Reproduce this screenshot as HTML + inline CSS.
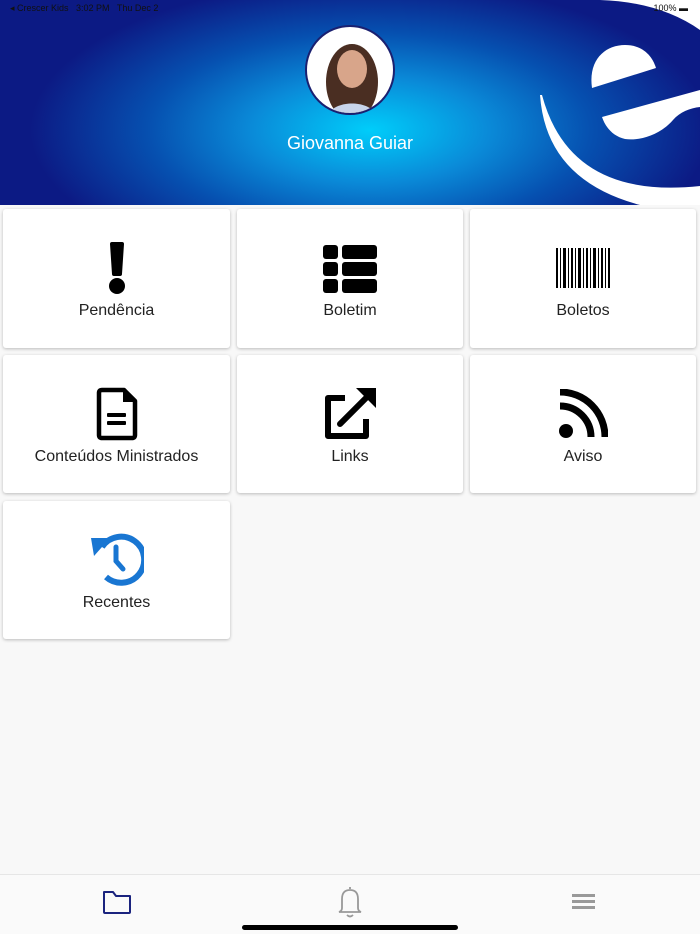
<!DOCTYPE html>
<html><head><meta charset="utf-8"><style>
*{margin:0;padding:0;box-sizing:border-box}
body{width:700px;height:934px;background:#f8f8f8;font-family:"Liberation Sans",sans-serif;position:relative;overflow:hidden}
.hdr{position:absolute;left:0;top:0;width:700px;height:205px;background:radial-gradient(ellipse 340px 150px at 370px 130px,#00cdfa 0%,#0a8ad8 35%,#0650b0 65%,#0c1a84 100%);overflow:hidden}
.sb{position:absolute;top:3px;font-size:9px;color:#111}
.av{position:absolute;left:305px;top:25px;width:90px;height:90px;border-radius:50%;background:#fff;border:2px solid #1a2070;overflow:hidden}
.name{position:absolute;top:133px;left:0;width:700px;text-align:center;color:#fff;font-size:18px}
.card{position:absolute;background:#fff;border-radius:3px;box-shadow:0 1px 3px rgba(0,0,0,.25)}
.card .lbl{position:absolute;left:0;right:0;top:93px;text-align:center;font-size:16px;color:#222}
.card svg{position:absolute;left:50%;transform:translateX(-50%);top:32px}
.bot{position:absolute;top:874px;left:0;width:700px;height:60px;border-top:1px solid #e6e6e6;background:#fafafa}
</style></head><body>
<div class="hdr">
<svg width="700" height="205" style="position:absolute;left:0;top:0">
<path d="M540 95 Q546 180 640 205 L700 205 L700 186 Q570 200 542 95 Z" fill="#fff"/>
<path d="M600 0 Q660 2 700 30 L700 0Z" fill="#fff"/>
<path d="M592 88 C588 60 605 45 625 45 C642 45 652 55 656 68 Z" fill="#fff"/>
<path d="M602 117 L700 90 L700 107 C690 108 680 112 673 120 C660 135 640 141 625 139 C612 136 605 126 602 117Z" fill="#fff"/>
</svg>
<div class="sb" style="left:10px">◂ Crescer Kids &nbsp; 3:02 PM &nbsp; Thu Dec 2</div>
<div class="sb" style="right:12px">100% ▬</div>
<div class="av"><svg width="90" height="90"><ellipse cx="45" cy="55" rx="26" ry="38" fill="#4a2e22"/><ellipse cx="45" cy="42" rx="15" ry="19" fill="#d8a58a"/><path d="M20 90 C25 72 65 72 70 90Z" fill="#c8d4ea"/></svg></div>
<div class="name">Giovanna Guiar</div>
</div>

<div class="card" style="left:3px;top:209px;width:227px;height:139px">
<svg width="20" height="54" viewBox="0 0 20 54" style="top:32px"><path d="M3 3 Q3 1 5 1 L15 1 Q17 1 17 3 L15 33 Q15 35 13 35 L7 35 Q5 35 5 33Z"/><circle cx="10" cy="45" r="8"/></svg>
<div class="lbl">Pendência</div></div>
<div class="card" style="left:237px;top:209px;width:226px;height:139px">
<svg width="54" height="48" viewBox="0 0 54 48" style="top:36px"><g><rect x="0" y="0" width="15" height="14" rx="3"/><rect x="19" y="0" width="35" height="14" rx="3"/><rect x="0" y="17" width="15" height="14" rx="3"/><rect x="19" y="17" width="35" height="14" rx="3"/><rect x="0" y="34" width="15" height="14" rx="3"/><rect x="19" y="34" width="35" height="14" rx="3"/></g></svg>
<div class="lbl">Boletim</div></div>
<div class="card" style="left:470px;top:209px;width:226px;height:139px">
<svg width="54" height="40" viewBox="0 0 54 40" style="top:39px"><g fill="#000"><rect x="0" y="0" width="2" height="40"/><rect x="4" y="0" width="1" height="40"/><rect x="7" y="0" width="3" height="40"/><rect x="12" y="0" width="1" height="40"/><rect x="15" y="0" width="2" height="40"/><rect x="19" y="0" width="1" height="40"/><rect x="22" y="0" width="3" height="40"/><rect x="27" y="0" width="1" height="40"/><rect x="30" y="0" width="2" height="40"/><rect x="34" y="0" width="1" height="40"/><rect x="37" y="0" width="3" height="40"/><rect x="42" y="0" width="1" height="40"/><rect x="45" y="0" width="2" height="40"/><rect x="49" y="0" width="1" height="40"/><rect x="52" y="0" width="2" height="40"/></g></svg>
<div class="lbl">Boletos</div></div>

<div class="card" style="left:3px;top:355px;width:227px;height:138px">
<svg width="42" height="54" viewBox="0 0 42 54" style="top:32px"><path d="M6 3 H28 L39 14 V48 Q39 51 36 51 H6 Q3 51 3 48 V6 Q3 3 6 3Z" fill="none" stroke="#000" stroke-width="4.5" stroke-linejoin="round"/><path d="M27 3 V15 H39Z"/><rect x="11" y="26" width="19" height="4" rx="1"/><rect x="11" y="34" width="19" height="4" rx="1"/></svg>
<div class="lbl">Conteúdos Ministrados</div></div>
<div class="card" style="left:237px;top:355px;width:226px;height:138px">
<svg width="54" height="54" viewBox="0 0 54 54" style="top:32px"><path d="M22 11 H5 V49 H43 V32" fill="none" stroke="#000" stroke-width="6" stroke-linejoin="round"/><path d="M17 37 L46 8" stroke="#000" stroke-width="6" stroke-linecap="round"/><path d="M33 1 H53 V21Z"/></svg>
<div class="lbl">Links</div></div>
<div class="card" style="left:470px;top:355px;width:226px;height:138px">
<svg width="50" height="50" viewBox="0 0 50 50" style="top:34px"><circle cx="8" cy="42" r="7"/><path d="M2 17 A31 31 0 0 1 33 48" fill="none" stroke="#000" stroke-width="7"/><path d="M2 3 A45 45 0 0 1 47 48" fill="none" stroke="#000" stroke-width="7"/></svg>
<div class="lbl">Aviso</div></div>

<div class="card" style="left:3px;top:501px;width:227px;height:138px">
<svg width="54" height="54" viewBox="0 0 54 54" style="top:32px"><g fill="#1976d2"><path d="M12 14 A23 23 0 1 1 16 44" fill="none" stroke="#1976d2" stroke-width="6"/><path d="M0 3 L19 3 L3 21Z" transform="translate(1 2)"/><path d="M26 14 V28 L33 36" fill="none" stroke="#1976d2" stroke-width="5" stroke-linecap="round"/></g></svg>
<div class="lbl">Recentes</div></div>

<div class="bot">
<svg width="32" height="26" style="position:absolute;left:101px;top:14px"><path d="M3 3 H12 L15 7 H29 V23 Q29 24 28 24 H4 Q3 24 3 23Z" fill="none" stroke="#1a237e" stroke-width="2" stroke-linejoin="round"/></svg>
<svg width="30" height="36" style="position:absolute;left:335px;top:9px"><path d="M15 3 V5 M7 24 V15 Q7 6 15 6 Q23 6 23 15 V24 Q23 27 26 28 H4 Q7 27 7 24Z M12 31 Q15 34 18 31" fill="none" stroke="#999" stroke-width="1.8"/></svg>
<div style="position:absolute;left:572px;top:19px;width:23px;height:3px;background:#999"></div>
<div style="position:absolute;left:572px;top:25px;width:23px;height:3px;background:#999"></div>
<div style="position:absolute;left:572px;top:31px;width:23px;height:3px;background:#999"></div>
<div style="position:absolute;left:242px;top:50px;width:216px;height:5px;border-radius:3px;background:#000"></div>
</div>
</body></html>
